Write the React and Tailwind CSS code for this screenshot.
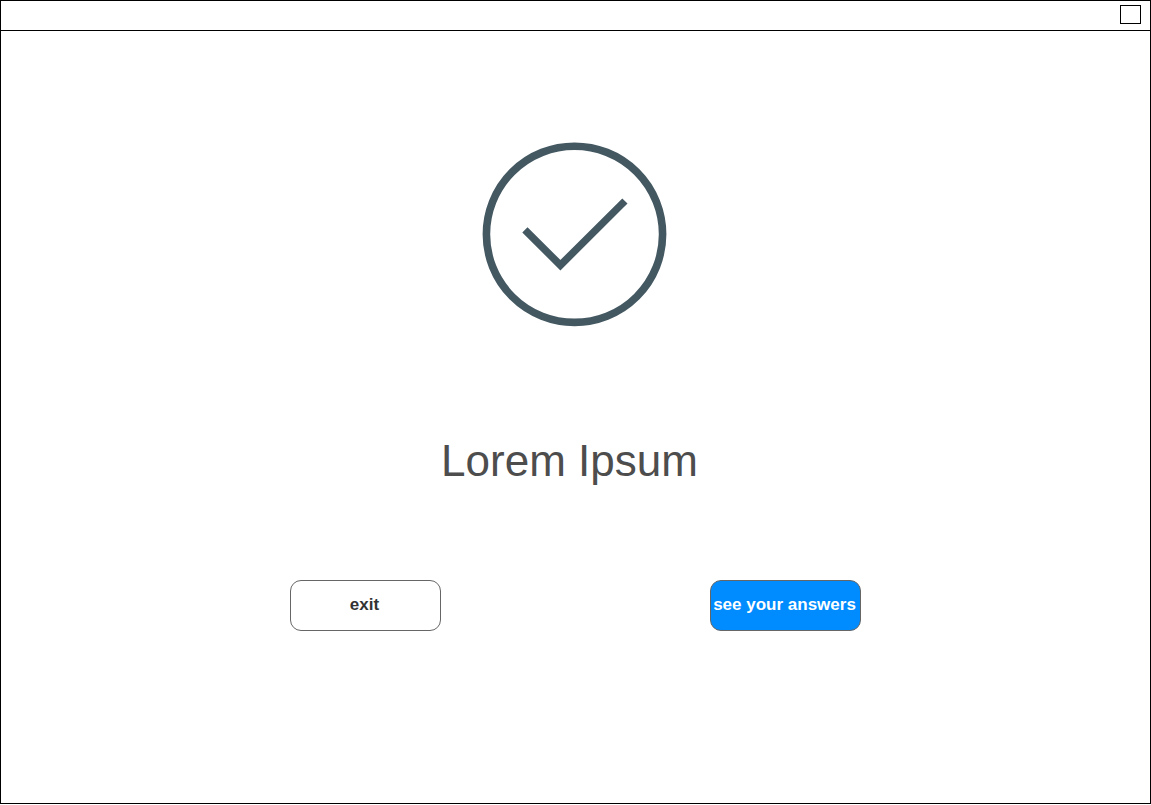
function CheckCircle() {
  return (
    <svg
      viewBox="0 0 186 186"
      className="h-[186px] w-[186px] overflow-visible text-[#445862]"
      fill="none"
      stroke="currentColor"
      aria-hidden="true"
    >
      <circle cx="91.5" cy="93.3" r="88.1" strokeWidth="7.6" />
      <path d="M41.9 88.9 L77.4 124.2 L141.9 60" strokeWidth="7.4" strokeLinejoin="miter" />
    </svg>
  );
}

const buttonBase =
  "h-[51px] w-[151px] shrink-0 whitespace-nowrap rounded-[11px] border border-[#666666] pr-1 pb-0.5 pl-0.5 text-[17px] leading-5 font-bold";

export default function App() {
  return (
    <div className="flex min-h-[calc(100vh-1px)] flex-col border border-black bg-white font-['Liberation_Sans',Arial,sans-serif]">
      <header className="flex h-[30px] items-start justify-end border-b border-black pt-1 pr-[9px]">
        <button type="button" aria-label="Maximize" className="h-[19px] w-[21px] border border-black bg-white" />
      </header>
      <main className="flex flex-1 flex-col items-center pt-[110px]">
        <CheckCircle />
        <h1 className="mt-[108px] pr-3 text-[44px] leading-[52px] text-[#4d4d4d]">Lorem Ipsum</h1>
        <div className="mt-[93px] flex gap-[269px]">
          <button type="button" className={`${buttonBase} bg-white text-[#333333]`}>
            exit
          </button>
          <button type="button" className={`${buttonBase} bg-[#008cff] text-white`}>
            see your answers
          </button>
        </div>
      </main>
    </div>
  );
}
